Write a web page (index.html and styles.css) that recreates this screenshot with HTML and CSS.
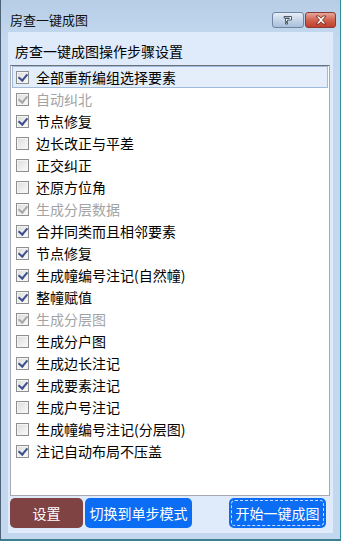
FILE: index.html
```html
<!DOCTYPE html>
<html lang="zh-CN">
<head>
  <meta charset="UTF-8" />
  <title>房查一键成图</title>
  <link rel="stylesheet" href="styles.css">
</head>
<body>
  <div class="window">
    <div class="titlebar">
      <span class="title">房查一键成图</span>
      <div class="caption-btns">
        <div class="cap help">
          <svg width="12" height="10" viewBox="0 0 12 10"><path d="M2 1.5h7.5v3.5h-4v1.5h-2v-3h4v-0.5h-5.5z M3.5 7.5h2v1.5h-2z" fill="#fff" stroke="#3a4a5e" stroke-width="0.9"/></svg>
        </div>
        <div class="cap close">
          <svg width="14" height="10" viewBox="0 0 14 10"><path d="M2 1h3l2 2.2 2-2.2h3l-3.5 4 3.5 4h-3l-2-2.2-2 2.2h-3l3.5-4z" fill="#fff" stroke="#7a2a22" stroke-width="0.9"/></svg>
        </div>
      </div>
    </div>
    <div class="client">
      <div class="caption">房查一键成图操作步骤设置</div>
      <div class="listbox">
        <div class="item focus"><span class="cb on"></span>全部重新编组选择要素</div>
        <div class="item off"><span class="cb on"></span>自动纠北</div>
        <div class="item"><span class="cb on"></span>节点修复</div>
        <div class="item"><span class="cb"></span>边长改正与平差</div>
        <div class="item"><span class="cb"></span>正交纠正</div>
        <div class="item"><span class="cb"></span>还原方位角</div>
        <div class="item off"><span class="cb on"></span>生成分层数据</div>
        <div class="item"><span class="cb on"></span>合并同类而且相邻要素</div>
        <div class="item"><span class="cb on"></span>节点修复</div>
        <div class="item"><span class="cb on"></span>生成幢编号注记(自然幢)</div>
        <div class="item"><span class="cb on"></span>整幢赋值</div>
        <div class="item off"><span class="cb on"></span>生成分层图</div>
        <div class="item"><span class="cb"></span>生成分户图</div>
        <div class="item"><span class="cb on"></span>生成边长注记</div>
        <div class="item"><span class="cb on"></span>生成要素注记</div>
        <div class="item"><span class="cb"></span>生成户号注记</div>
        <div class="item"><span class="cb"></span>生成幢编号注记(分层图)</div>
        <div class="item"><span class="cb on"></span>注记自动布局不压盖</div>
      </div>
      <div class="buttons">
        <button class="btn brown">设置</button>
        <button class="btn blue wide">切换到单步模式</button>
        <button class="btn blue start"><span>开始一键成图</span></button>
      </div>
    </div>
  </div>
</body>
</html>
```

FILE: styles.css
```css
* { box-sizing: border-box; }
body { margin: 0; font-family: "Noto Sans CJK SC", "Noto Sans", sans-serif; }

.window {
  width: 341px; height: 541px;
  background: linear-gradient(#b6cde6, #c4d9ef 40px, #c3d8ee);
  border-left: 1px solid #4f6278; border-right: 1px solid #2f8c9c;
  border-bottom: 2px solid #3c7f92;
  padding: 0 7px 6px 7px;
}

.titlebar { height: 32px; display: flex; align-items: center; justify-content: space-between; }
.title { font-size: 13px; color: #111; padding-left: 2px; margin-top: 6px; }
.caption-btns { display: flex; gap: 1px; margin-top: 8px; margin-right: -3px; }
.cap { height: 16px; display: flex; align-items: center; justify-content: center; border-radius: 3px; }
.help { width: 32px; border: 1px solid #6f86a2; background: linear-gradient(#e7eef7, #c5d5e8 50%, #a9c0dc); }
.close { width: 31px; border: 1px solid #8a3a33; background: linear-gradient(#e6a79c, #d0634f 50%, #bf3f2c); }

.client { height: 501px; background: #dfebfa; padding: 9px 3px 0 2px; }
.caption { font-size: 14px; line-height: 20px; padding-left: 5px; margin-bottom: 4px; color: #000; }

.listbox {
  height: 431px; background: #fff;
  border: 1px solid #a6aab2; border-top-color: #6c7078;
  padding: 0 1px;
}
.item { height: 22px; display: flex; align-items: center; font-size: 14px; color: #000; padding-left: 3px; border: 1px solid transparent; }
.item.focus { background: #e4eefa; border-color: #9fbadb; }
.item.off { color: #a3a3a3; }

.cb {
  width: 13px; height: 13px; margin-right: 7px; position: relative;
  border: 1px solid #8e8f8f;
  background: linear-gradient(135deg, #dcdcdc, #fbfbfb);
  box-shadow: inset 0 0 0 1px #f4f4f4;
}
.cb.on::after {
  content: ""; position: absolute; left: 3px; top: 0px;
  width: 4px; height: 7px;
  border: solid #3e4f8e; border-width: 0 2px 2px 0;
  transform: rotate(40deg);
}
.off .cb.on::after { border-color: #a8a8a8; }

.buttons { display: flex; margin-top: 2px; height: 30px; }
.btn {
  height: 30px; border: 0; border-radius: 5px; color: #fff;
  font-family: "Noto Sans CJK SC", "Noto Sans", sans-serif; font-size: 14px;
  padding: 0; margin-right: 2px;
}
.brown { width: 73px; background: #7f4343; }
.blue { background: #0a6df4; }
.wide { width: 107px; }
.start { width: 97px; margin-left: auto; margin-right: 4px; padding: 2px; }
.start span {
  display: flex; align-items: center; justify-content: center;
  height: 100%; border: 1px dashed #c9dcff; border-radius: 4px;
}
```
